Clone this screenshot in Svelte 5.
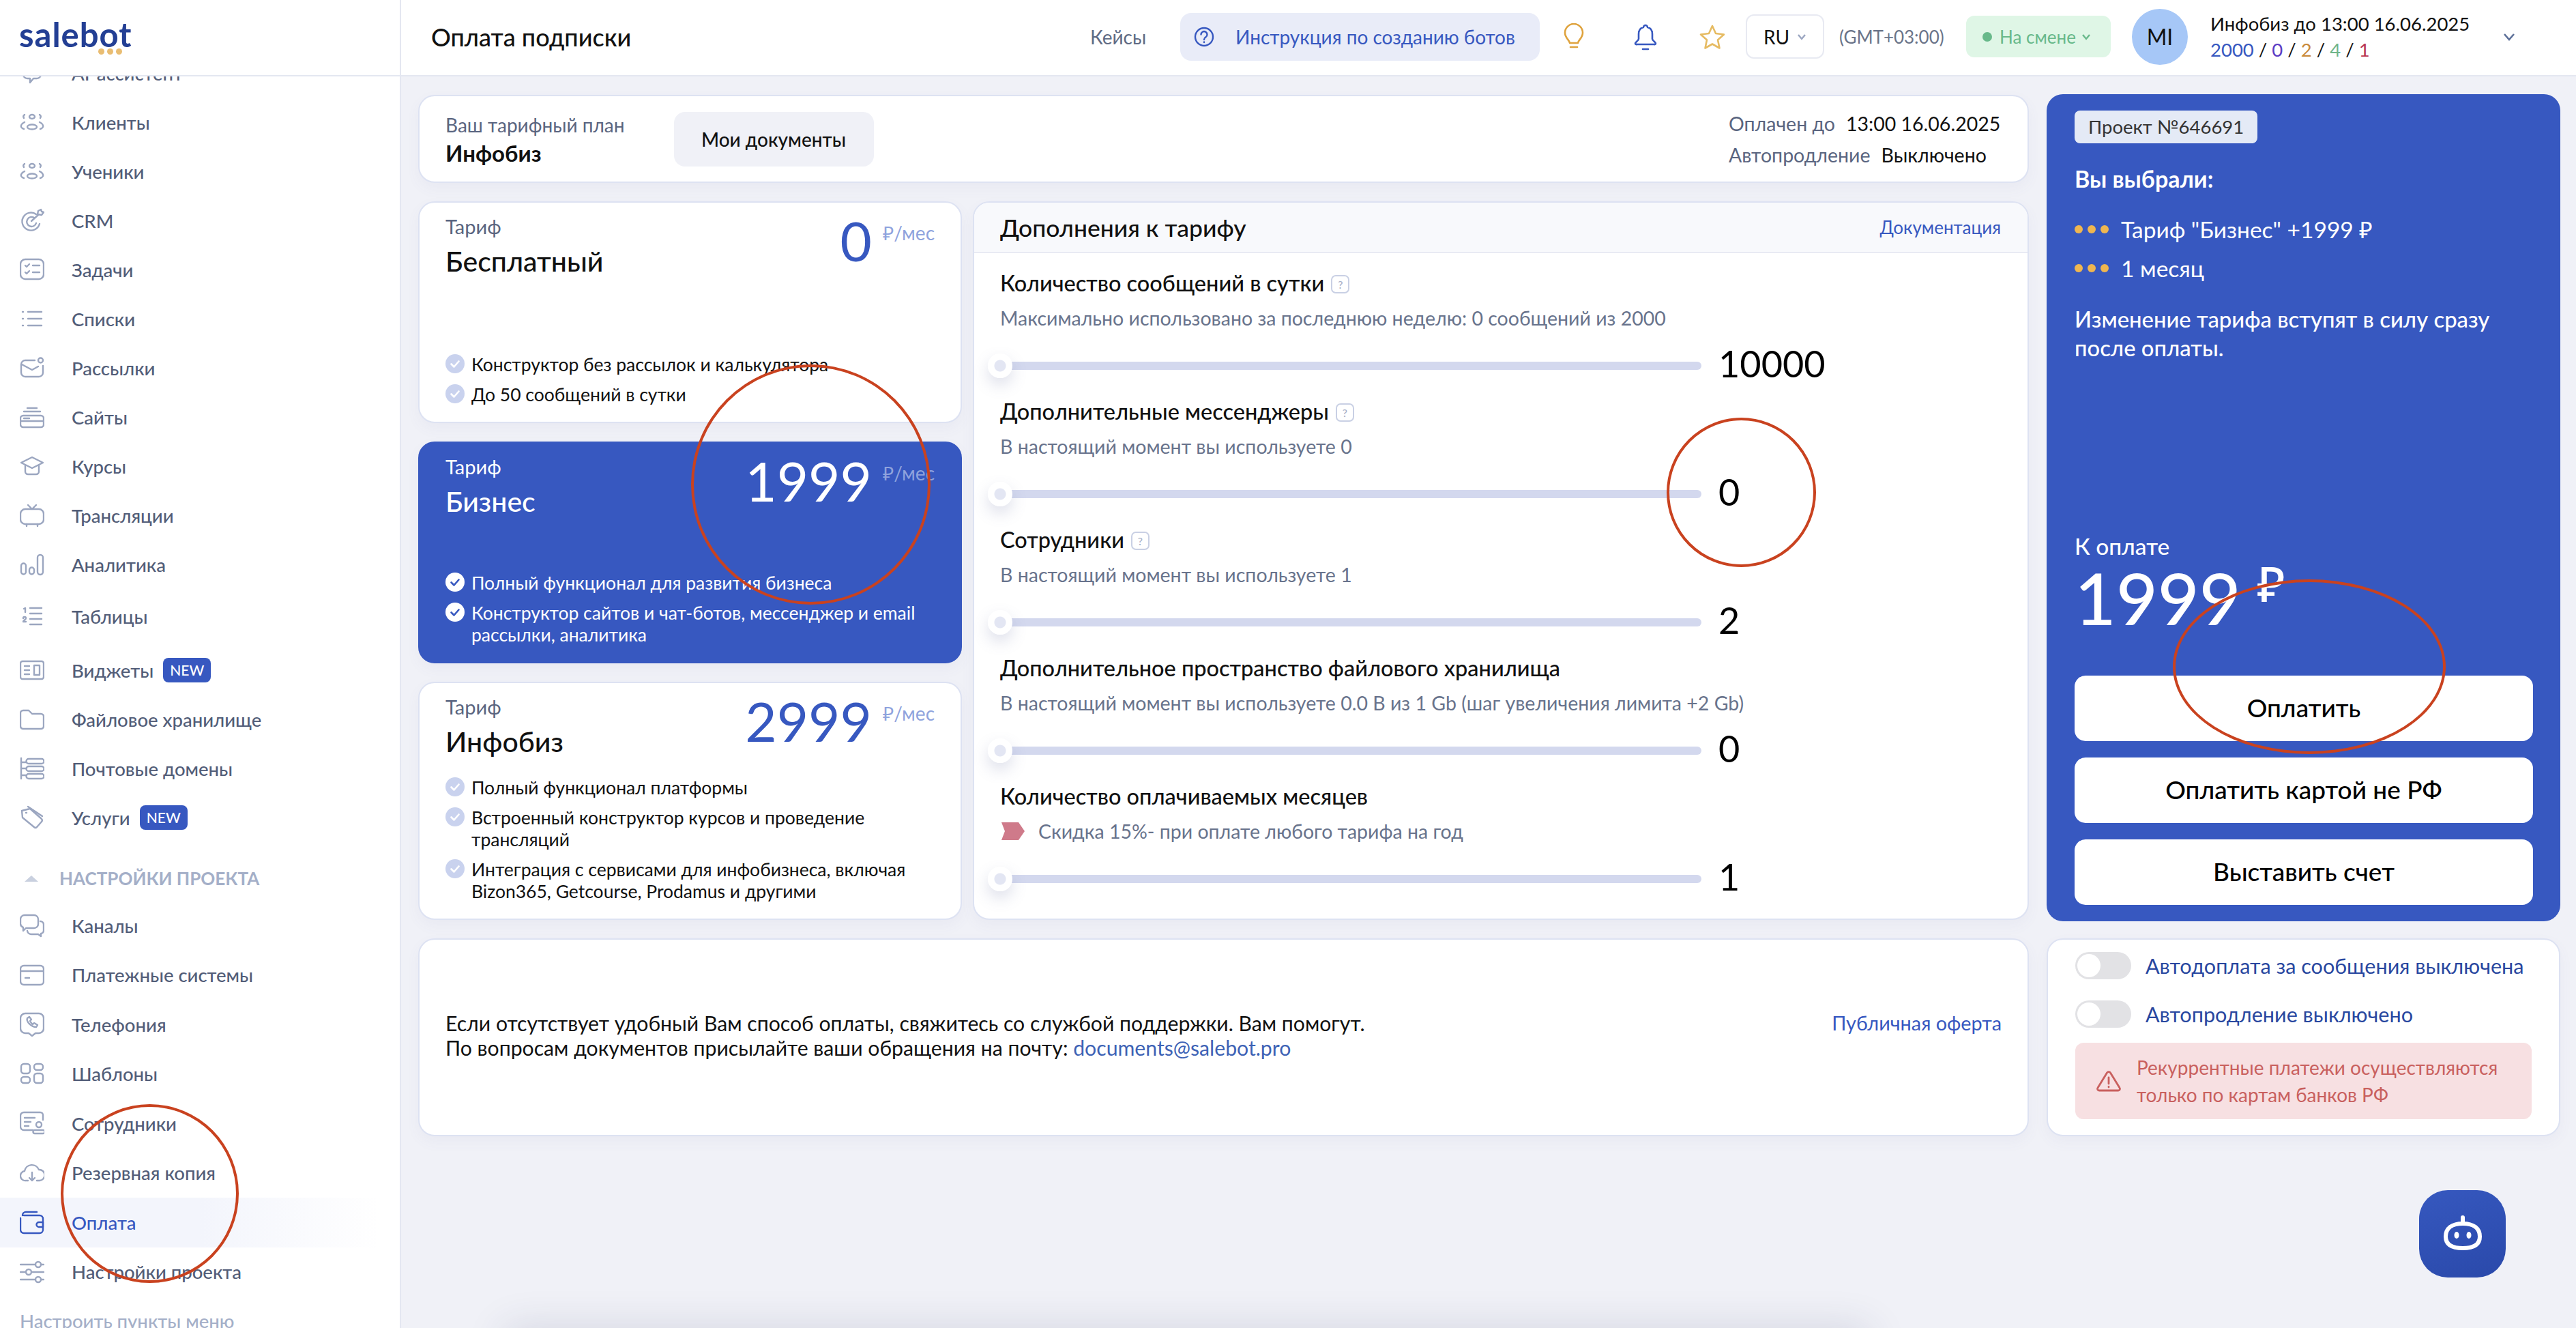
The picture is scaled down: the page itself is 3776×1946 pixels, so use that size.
<script>
  const navTop = [
    { label: "AI-ассистент", icon: ["M5 8a6 6 0 0 1 6-6h14a6 6 0 0 1 6 6v12a6 6 0 0 1-6 6h-5l-5 6v-6h-4a6 6 0 0 1-6-6z"] },
    { label: "Клиенты", icon: "people" },
    { label: "Ученики", icon: "people" },
    { label: "CRM", icon: ["M24 9a13 13 0 1 0 5 14", "M21 14a7 7 0 1 0 3 8", "M17 19 28 9", "M26 9l1-5 4-2 1 3 3 1-3 4z"] },
    { label: "Задачи", icon: ["M8 3h20a7 7 0 0 1 7 7v15a7 7 0 0 1-7 7H8a7 7 0 0 1-7-7V10a7 7 0 0 1 7-7z", "M8 12l2 2 4-4", "M8 22l2 2 4-4", "M19 12h10", "M19 22h10"] },
    { label: "Списки", icon: ["M4 8h1", "M4 18h1", "M4 28h1", "M12 8h20", "M12 18h20", "M12 28h20"] },
    { label: "Рассылки", icon: ["M22 7H8a6 6 0 0 0-6 6v12a6 6 0 0 0 6 6h20a6 6 0 0 0 6-6V15", "M3 13l15 8 9-5", "M27 7a3.5 3.5 0 1 0 7 0a3.5 3.5 0 1 0-7 0"] },
    { label: "Сайты", icon: ["M5 16h26a4 4 0 0 1 4 4v9a4 4 0 0 1-4 4H5a4 4 0 0 1-4-4v-9a4 4 0 0 1 4-4z", "M1 24h34", "M6 20h8", "M6 10h24", "M11 5h14"] },
    { label: "Курсы", icon: ["M18 5 34 13 18 21 2 13z", "M8 17v9a4 4 0 0 0 4 4h12a4 4 0 0 0 4-4v-9"] },
    { label: "Трансляции", icon: ["M8 9h20a7 7 0 0 1 7 7v8a7 7 0 0 1-7 7H8a7 7 0 0 1-7-7v-8a7 7 0 0 1 7-7z", "M12 3l6 6 6-6", "M10 31v3", "M26 31v3"] },
    { label: "Аналитика", icon: ["M2 20a3.5 3.5 0 0 1 7 0v9a3.5 3.5 0 0 1-7 0z", "M14 26a3.5 3.5 0 0 1 7 0v3a3.5 3.5 0 0 1-7 0z", "M26 8a4 4 0 0 1 8 0v21a4 4 0 0 1-8 0z"] },
    { label: "Таблицы", tall: 4, icon: ["M6 7l2-1v6", "M5 21a2 2 0 0 1 4 0c0 2-4 3-4 5h4", "M15 6h17", "M15 14h17", "M15 22h17", "M15 30h17"] },
    { label: "Виджеты", badge: true, tall: 7, icon: ["M4 5h28a3 3 0 0 1 3 3v20a3 3 0 0 1-3 3H4a3 3 0 0 1-3-3V8a3 3 0 0 1 3-3z", "M7 12h7", "M7 18h7", "M7 24h7", "M21 11h8v14h-8z"] },
    { label: "Файловое хранилище", icon: ["M1 9a4 4 0 0 1 4-4h8l5 5h13a4 4 0 0 1 4 4v14a4 4 0 0 1-4 4H5a4 4 0 0 1-4-4z"] },
    { label: "Почтовые домены", icon: ["M2 3v30", "M2 9h8", "M2 18h8", "M2 28h8", "M13 4h19a3 3 0 0 1 0 7H13a3 3 0 0 1 0-7z", "M13 15h19a3 3 0 0 1 0 7H13a3 3 0 0 1 0-7z", "M13 26h19a3 3 0 0 1 0 7H13a3 3 0 0 1 0-7z"] },
    { label: "Услуги", badge: true, icon: ["M3 8l12-3 17 15a3 3 0 0 1 0 4l-7 8a3 3 0 0 1-4 0L4 18z", "M12 2l21 14", "M9 11h1"] }
  ];

  const navBottom = [
    { label: "Каналы", icon: ["M7 3h14a6 6 0 0 1 6 6v7a6 6 0 0 1-6 6H9l-4 4v-5a6 6 0 0 1-4-5V9a6 6 0 0 1 6-6z", "M30 12a5 5 0 0 1 5 5v8a5 5 0 0 1-4 5v4l-4-3H17a6 6 0 0 1-6-5"] },
    { label: "Платежные системы", icon: ["M6 4h24a5 5 0 0 1 5 5v18a5 5 0 0 1-5 5H6a5 5 0 0 1-5-5V9a5 5 0 0 1 5-5z", "M1 12h34", "M8 22h6"] },
    { label: "Телефония", icon: ["M8 2h20a7 7 0 0 1 7 7v15a7 7 0 0 1-7 7h-5l-5 4-5-4H8a7 7 0 0 1-7-7V9a7 7 0 0 1 7-7z", "M11 9c-2 5 6 13 13 13l2-3-5-3-2 2c-2-1-3-3-4-5l2-2-3-4z"] },
    { label: "Шаблоны", icon: ["M2 7a4 4 0 0 1 4-4h5a4 4 0 0 1 4 4v6a4 4 0 0 1-4 4H6a4 4 0 0 1-4-4z", "M21 7a4 4 0 0 1 4-4h5a4 4 0 0 1 4 4v1a4 4 0 0 1-4 4h-5a4 4 0 0 1-4-4z", "M2 26a4 4 0 0 1 4-4h5a4 4 0 0 1 4 4v1a4 4 0 0 1-4 4H6a4 4 0 0 1-4-4z", "M21 21a4 4 0 0 1 4-4h5a4 4 0 0 1 4 4v6a4 4 0 0 1-4 4h-5a4 4 0 0 1-4-4z"] },
    { label: "Сотрудники", icon: ["M19 28H6a5 5 0 0 1-5-5V7a5 5 0 0 1 5-5h24a4 4 0 0 1 4 4v7", "M7 10h15", "M7 16h9", "M7 22h6", "M24 20a4 4 0 1 0 8 0a4 4 0 1 0-8 0", "M22 33h12a2.500 2.500 0 0 0 0-5H22a2.500 2.500 0 0 0 0 5z"] },
    { label: "Резервная копия", icon: ["M9 29a7 7 0 0 1-2-14 11 11 0 0 1 21-2 8 8 0 0 1 1 16h-4", "M18 17v11", "M14 25l4 4 4-4", "M10 29h2"] },
    { label: "Оплата", active: true, icon: ["M4 8a5 5 0 0 1 5-5h16", "M6 8h23a5 5 0 0 1 5 5v16a5 5 0 0 1-5 5H6a5 5 0 0 1-5-5V12", "M28 18h6v7h-6a3.500 3.500 0 0 1 0-7z"] },
    { label: "Настройки проекта", icon: ["M1 7h22", "M31 7h4", "M23 7a4 4 0 1 0 8 0a4 4 0 1 0-8 0", "M1 18h8", "M17 18h18", "M9 18a4 4 0 1 0 8 0a4 4 0 1 0-8 0", "M1 29h22", "M31 29h4", "M23 29a4 4 0 1 0 8 0a4 4 0 1 0-8 0"] }
  ];

  const tariffs = [
    { name: "Бесплатный", price: 0, features: ["Конструктор без рассылок и калькулятора", "До 50 сообщений в сутки"] },
    { name: "Бизнес", price: 1999, selected: true, features: ["Полный функционал для развития бизнеса", "Конструктор сайтов и чат-ботов, мессенджер и email рассылки, аналитика"] },
    { name: "Инфобиз", price: 2999, features: ["Полный функционал платформы", "Встроенный конструктор курсов и проведение трансляций", "Интеграция с сервисами для инфобизнеса, включая Bizon365, Getcourse, Prodamus и другими"] }
  ];

  const addons = [
    { title: "Количество сообщений в сутки", hint: true, sub: "Максимально использовано за последнюю неделю: 0 сообщений из 2000", value: 10000 },
    { title: "Дополнительные мессенджеры", hint: true, sub: "В настоящий момент вы используете 0", value: 0 },
    { title: "Сотрудники", hint: true, sub: "В настоящий момент вы используете 1", value: 2 },
    { title: "Дополнительное пространство файлового хранилища", sub: "В настоящий момент вы используете 0.0 B из 1 Gb (шаг увеличения лимита +2 Gb)", value: 0 },
    { title: "Количество оплачиваемых месяцев", discount: true, sub: "Скидка 15%- при оплате любого тарифа на год", value: 1 }
  ];

  const people = ["M14 10a4 3 0 1 0 8 0a4 3 0 1 0-8 0", "M7 7q-3 2-1 5", "M29 7q3 2 1 5", "M11 25a7 3.500 0 1 0 14 0a7 3.500 0 1 0-14 0", "M7 18q-6 3-5 7 1 2 4 3", "M29 18q6 3 5 7-1 2-4 3"];
</script>

{#snippet navRow(item)}
  <div class="nav-row" class:active={item.active} style:margin-top={item.tall ? item.tall + "px" : null}>
    <svg class="nav-icon" viewBox="0 0 36 36">
      {#each item.icon === "people" ? people : item.icon as d}
        <path {d} />
      {/each}
    </svg>
    <span>{item.label}</span>
    {#if item.badge}<span class="new">NEW</span>{/if}
  </div>
{/snippet}

{#snippet check()}
  <svg class="check" viewBox="0 0 28 28">
    <circle class="check-bg" cx="14" cy="14" r="14" />
    <path class="check-mark" d="M8.500 14.500l4 4 7-8" />
  </svg>
{/snippet}

<div class="page">
  <aside class="sidebar">
    <div class="logo">
      <span class="logo-text">salebot</span>
      <span class="logo-dots"><i></i><i></i><i></i></span>
    </div>
    <nav class="nav">
      {#each navTop as item}
        {@render navRow(item)}
      {/each}
      <div class="nav-section"><span class="triangle"></span>НАСТРОЙКИ ПРОЕКТА</div>
      {#each navBottom as item}
        {@render navRow(item)}
      {/each}
      <div class="nav-custom">Настроить пункты меню</div>
    </nav>
  </aside>

  <div class="main">
    <header class="topbar">
      <h1>Оплата подписки</h1>
      <a class="cases" href="#cases">Кейсы</a>
      <div class="guide">
        <svg viewBox="0 0 30 30" class="guide-icon">
          <circle cx="15" cy="15" r="13" />
          <path d="M10.500 11.500a4.500 4.500 0 1 1 7 3.800c-1.800 1.200-2.500 2-2.500 3.700" />
          <path d="M15 22.500v.5" />
        </svg>
        Инструкция по созданию ботов
      </div>
      <svg class="bar-icon bulb" viewBox="0 0 32 40">
        <path d="M10 29c0-4-7-7-7-15a13 13 0 0 1 26 0c0 8-7 11-7 15z" />
        <path d="M11 35h10" />
      </svg>
      <svg class="bar-icon bell" viewBox="0 0 36 40">
        <path d="M18 3a3 3 0 0 1 3 3c5 1 7 5 7 10v7c0 3 5 4 5 7a1.500 1.500 0 0 1-2 1H5a1.500 1.500 0 0 1-2-1c0-3 5-4 5-7v-7c0-5 2-9 7-10a3 3 0 0 1 3-3z" />
        <path d="M14 38h8" />
      </svg>
      <svg class="bar-icon star" viewBox="0 0 40 38">
        <path d="M20 3l5 11 12 1.500-9 8 2.500 12L20 29.500 9.500 35.500l2.500-12-9-8L15 14z" />
      </svg>
      <div class="lang">RU <svg class="chev" viewBox="0 0 14 10"><path d="M2 2l5 6 5-6" /></svg></div>
      <span class="tz">(GMT+03:00)</span>
      <div class="status"><i></i>На смене <svg class="chev" viewBox="0 0 14 10"><path d="M2 2l5 6 5-6" /></svg></div>
      <div class="avatar">MI</div>
      <div class="account">
        <div>Инфобиз до 13:00 16.06.2025</div>
        <div class="counts"><b class="c1">2000</b> / <b class="c2">0</b> / <b class="c3">2</b> / <b class="c4">4</b> / <b class="c5">1</b></div>
      </div>
      <svg class="account-chev" viewBox="0 0 20 14"><path d="M3 3l7 8 7-8" /></svg>
    </header>

    <div class="content">
      <div class="left-col">
        <section class="card plan">
          <div>
            <div class="muted">Ваш тарифный план</div>
            <div class="plan-name">Инфобиз</div>
          </div>
          <div class="docs-btn">Мои документы</div>
          <div class="plan-meta">
            <div><span class="muted">Оплачен до</span><span>13:00 16.06.2025</span></div>
            <div><span class="muted">Автопродление</span><span>Выключено</span></div>
          </div>
        </section>

        <div class="middle">
          <div class="tariffs">
            {#each tariffs as t}
              <section class="card tariff" class:selected={t.selected}>
                <div class="tariff-head">
                  <div>
                    <div class="tariff-label">Тариф</div>
                    <div class="tariff-name">{t.name}</div>
                  </div>
                  <div class="tariff-price">{t.price}</div>
                  <div class="tariff-unit">₽/мес</div>
                </div>
                <ul class="features">
                  {#each t.features as f}
                    <li>{@render check()}<span>{f}</span></li>
                  {/each}
                </ul>
              </section>
            {/each}
          </div>

          <section class="card addons">
            <div class="addons-head">
              <h2>Дополнения к тарифу</h2>
              <a href="#docs">Документация</a>
            </div>
            <div class="addons-body">
              {#each addons as a}
                <div class="addon">
                  <div class="addon-title">
                    {a.title}
                    {#if a.hint}<span class="hint">?</span>{/if}
                  </div>
                  <div class="addon-sub">
                    {#if a.discount}
                      <svg class="ribbon" viewBox="0 0 38 30"><path d="M2 2h25l9 13-9 13H2l5-13z" /></svg>
                    {/if}
                    {a.sub}
                  </div>
                  <div class="slider">
                    <div class="track"><span class="thumb"></span></div>
                    <span class="value">{a.value}</span>
                  </div>
                </div>
              {/each}
            </div>
          </section>
        </div>
      </div>

      <section class="pay">
        <div class="chip">Проект №646691</div>
        <div class="pay-title">Вы выбрали:</div>
        <div class="pay-line"><span class="dots"><i></i><i></i><i></i></span>Тариф "Бизнес" +1999 ₽</div>
        <div class="pay-line"><span class="dots"><i></i><i></i><i></i></span>1 месяц</div>
        <p class="pay-note">Изменение тарифа вступят в силу сразу<br />после оплаты.</p>
        <div class="pay-bottom">
          <div class="pay-label">К оплате</div>
          <div class="pay-sum">1999<sup>₽</sup></div>
          <button>Оплатить</button>
          <button>Оплатить картой не РФ</button>
          <button>Выставить счет</button>
        </div>
      </section>

      <section class="card help">
        <p>
          Если отсутствует удобный Вам способ оплаты, свяжитесь со службой поддержки. Вам помогут.<br />
          По вопросам документов присылайте ваши обращения на почту: <a href="#mail">documents@salebot.pro</a>
        </p>
        <a class="offer" href="#offer">Публичная оферта</a>
      </section>

      <section class="card auto">
        <div class="auto-row"><span class="toggle"></span>Автодоплата за сообщения выключена</div>
        <div class="auto-row"><span class="toggle"></span>Автопродление выключено</div>
        <div class="alert">
          <svg viewBox="0 0 38 32">
            <path d="M16.500 4 3 26a2.500 2.500 0 0 0 2 4h28a2.500 2.500 0 0 0 2-4L21.500 4a3 3 0 0 0-5 0z" />
            <path d="M19 11v9" />
            <path d="M19 24.500v.5" />
          </svg>
          <span>Рекуррентные платежи осуществляются<br />только по картам банков РФ</span>
        </div>
      </section>
    </div>
  </div>

  <div class="bot">
    <svg viewBox="0 0 60 56">
      <path class="bot-line" d="M30 4v9" />
      <circle class="bot-dot" cx="30" cy="4" r="3" />
      <path class="bot-line" d="M30 13c-16 0-25 7-25 19 0 11 8 17 25 17s25-6 25-17c0-12-9-19-25-19z" />
      <ellipse class="bot-dot" cx="21" cy="30" rx="3.500" ry="5" />
      <ellipse class="bot-dot" cx="39" cy="30" rx="3.500" ry="5" />
    </svg>
  </div>

  <div class="foot-shadow"></div>

  <span class="mark mark-price"></span>
  <span class="mark mark-zero"></span>
  <span class="mark mark-pay"></span>
  <span class="mark mark-nav"></span>
</div>

<style>
  :global(body) {
    margin: 0;
    background: #f0f1f7;
  }

  .page {
    position: relative;
    display: flex;
    width: 3776px;
    height: 1946px;
    overflow: hidden;
    background: #f0f1f7;
    color: #111;
    font-family: Lato, "Noto Sans", sans-serif;
    font-size: 28px;
  }

  /* sidebar */
  .sidebar {
    position: relative;
    flex: 0 0 586px;
    height: 1946px;
    overflow: hidden;
    background: #fff;
    border-right: 2px solid #e4e7f1;
  }

  .logo {
    position: relative;
    z-index: 2;
    height: 110px;
    background: #fff;
    border-bottom: 2px solid #e4e7f1;
  }

  .logo-text {
    position: absolute;
    left: 28px;
    top: 20px;
    color: #233f94;
    font-size: 49px;
    font-weight: 700;
    line-height: 60px;
    letter-spacing: 1px;
  }

  .logo-dots {
    position: absolute;
    left: 144px;
    top: 71px;
    display: flex;
    gap: 4px;
  }

  .logo-dots i {
    width: 9px;
    height: 9px;
    border-radius: 50%;
    background: #e9bd72;
  }

  .nav {
    display: flex;
    flex-direction: column;
    margin-top: -41px;
    color: #525d78;
    font-size: 27.5px;
    font-weight: 500;
  }

  .nav-row {
    display: flex;
    flex: 0 0 72px;
    align-items: center;
    padding-left: 29px;
    white-space: nowrap;
  }

  .nav-row.active {
    background: linear-gradient(90deg, #f3f5fc 50%, #fff 95%);
    color: #3758c0;
  }

  .nav-icon {
    flex: none;
    width: 36px;
    height: 36px;
    margin-right: 40px;
    fill: none;
    stroke: #9ba6c0;
    stroke-width: 2.4;
    stroke-linecap: round;
    stroke-linejoin: round;
  }

  .active .nav-icon {
    stroke: #3758c0;
  }

  .new {
    margin-left: 14px;
    padding: 0 10px;
    border-radius: 8px;
    background: #3758c0;
    color: #fff;
    font-size: 21px;
    line-height: 36px;
  }

  .nav-section {
    display: flex;
    align-items: center;
    margin: 20px 0 0 36px;
    height: 66px;
    color: #a4afc8;
    font-size: 26px;
    font-weight: 700;
  }

  .nav-section ~ .nav-row {
    flex-basis: 72.5px;
  }

  .triangle {
    width: 0;
    height: 0;
    margin-right: 31px;
    border: 10px solid transparent;
    border-top: 0;
    border-bottom: 9px solid #c9d0df;
  }

  .nav-custom {
    margin: 16px 0 0 29px;
    color: #a4afc8;
    line-height: 40px;
  }

  /* header */
  .main {
    flex: 1;
    min-width: 0;
  }

  .topbar {
    display: flex;
    align-items: center;
    box-sizing: border-box;
    height: 112px;
    padding: 0 0 3px 44px;
    background: #fff;
    border-bottom: 2px solid #e4e7f1;
  }

  h1 {
    margin: 0;
    font-size: 36px;
    font-weight: 500;
    width: 966px;
  }

  .cases {
    width: 132px;
    color: #606b84;
    text-decoration: none;
  }

  .guide {
    display: flex;
    align-items: center;
    width: 527px;
    height: 70px;
    box-sizing: border-box;
    padding-left: 20px;
    border-radius: 16px;
    background: #e9ecf8;
    color: #3758c0;
  }

  .guide-icon {
    width: 30px;
    height: 30px;
    margin-right: 31px;
    fill: none;
    stroke: #3758c0;
    stroke-width: 2.4;
    stroke-linecap: round;
  }

  .bar-icon {
    fill: none;
    stroke-width: 2.6;
    stroke-linecap: round;
    stroke-linejoin: round;
  }

  .bulb {
    width: 32px;
    height: 40px;
    margin-left: 34px;
    stroke: #dfa33e;
  }

  .bell {
    width: 36px;
    height: 40px;
    margin-left: 71px;
    stroke: #3758c0;
  }

  .star {
    width: 40px;
    height: 38px;
    margin-left: 60px;
    stroke: #e6bb62;
  }

  .lang {
    display: flex;
    align-items: center;
    justify-content: center;
    gap: 11px;
    width: 115px;
    height: 65px;
    box-sizing: border-box;
    margin-left: 29px;
    border: 2px solid #e8eaf2;
    border-radius: 12px;
  }

  .chev {
    width: 14px;
    height: 10px;
    fill: none;
    stroke: #9aa5c0;
    stroke-width: 2.4;
  }

  .tz {
    width: 156px;
    margin-left: 22px;
    color: #6a7489;
    font-size: 26px;
    white-space: nowrap;
  }

  .status {
    display: flex;
    align-items: center;
    gap: 8px;
    width: 212px;
    height: 61px;
    box-sizing: border-box;
    margin-left: 30px;
    padding-left: 24px;
    border-radius: 12px;
    background: #dff6e6;
    color: #68b98a;
    font-size: 26px;
    white-space: nowrap;
  }

  .status i {
    width: 14px;
    height: 14px;
    margin-right: 3px;
    border-radius: 50%;
    background: #68b98a;
  }

  .status .chev {
    stroke: #68b98a;
  }

  .avatar {
    flex: none;
    display: flex;
    align-items: center;
    justify-content: center;
    width: 82px;
    height: 82px;
    margin-left: 31px;
    border-radius: 50%;
    background: #a6c7f7;
    font-size: 32px;
  }

  .account {
    width: 428px;
    margin-left: 33px;
    font-size: 27.500px;
    line-height: 38px;
    white-space: nowrap;
  }

  .counts b {
    font-weight: 400;
  }

  .c1 { color: #3758c0; }
  .c2 { color: #5b3cc4; }
  .c3 { color: #c98a3a; }
  .c4 { color: #6fb58a; }
  .c5 { color: #b8354f; }

  .account-chev {
    width: 20px;
    height: 14px;
    fill: none;
    stroke: #5d7099;
    stroke-width: 2.6;
  }

  /* content */
  .content {
    display: grid;
    grid-template-columns: 2361px 753px;
    grid-template-rows: 1212px 290px;
    gap: 25px 26px;
    padding: 26px 0 0 25px;
  }

  .card {
    box-sizing: border-box;
    border: 2px solid #dde2f2;
    border-radius: 24px;
    background: #fff;
    box-shadow: 0 8px 20px rgba(90, 100, 150, 0.05);
  }

  .left-col {
    display: flex;
    flex-direction: column;
    gap: 27px;
    padding-top: 1px;
  }

  .plan {
    display: flex;
    align-items: center;
    flex: 0 0 129px;
    padding: 0 38px;
  }

  .muted {
    color: #5a6580;
    line-height: 40px;
  }

  .plan-name {
    margin-top: 1px;
    font-size: 33px;
    font-weight: 700;
    line-height: 40px;
  }

  .docs-btn {
    display: flex;
    align-items: center;
    justify-content: center;
    width: 293px;
    height: 80px;
    margin-left: 72px;
    border-radius: 16px;
    background: #f0f1f7;
    font-weight: 500;
  }

  .plan-meta {
    display: flex;
    flex-direction: column;
    gap: 6px;
    margin-left: auto;
    margin-right: 2px;
    font-size: 28.500px;
    line-height: 40px;
    width: 398px;
  }

  .plan-meta div {
    display: flex;
    gap: 16px;
    white-space: nowrap;
  }

  .middle {
    display: flex;
    gap: 16px;
    flex: 0 0 1053px;
  }

  .tariffs {
    display: flex;
    flex-direction: column;
    gap: 27px;
    flex: 0 0 797px;
  }

  .tariff {
    display: flex;
    flex-direction: column;
    flex: 1 1 auto;
    padding: 17px 38px 24px;
    height: 325px;
  }

  .tariff:nth-child(3) {
    flex-basis: 349px;
    height: 349px;
  }

  .tariff.selected {
    border-color: #3758c0;
    background: #3758c0;
    color: #fff;
  }

  .tariff-head {
    display: flex;
    align-items: flex-start;
  }

  .tariff-label {
    color: #5a6580;
    font-size: 29px;
    line-height: 36px;
  }

  .selected .tariff-label {
    color: #fff;
  }

  .tariff-name {
    margin-top: 8px;
    font-size: 41px;
    font-weight: 500;
    line-height: 50px;
  }

  .tariff-price {
    margin: -7px 0 0 auto;
    color: #3758c0;
    font-size: 80px;
    font-weight: 400;
    line-height: 90px;
  }

  .selected .tariff-price {
    color: #fff;
  }

  .tariff-unit {
    margin: 9px 0 0 16px;
    color: #8fa3dd;
    line-height: 36px;
  }

  .features {
    margin: auto 0 0;
    padding: 0;
    list-style: none;
    font-size: 26.500px;
    line-height: 32px;
  }

  .features li {
    display: flex;
    gap: 10px;
    margin-top: 12px;
  }

  .check {
    flex: none;
    width: 28px;
    height: 28px;
    margin-top: 1px;
  }

  .check-bg {
    fill: #c9d2ee;
  }

  .check-mark {
    fill: none;
    stroke: #fff;
    stroke-width: 2.6;
    stroke-linecap: round;
    stroke-linejoin: round;
  }

  .selected .check-bg {
    fill: #fff;
  }

  .selected .check-mark {
    stroke: #3758c0;
  }

  .addons {
    flex: 0 0 1548px;
    overflow: hidden;
  }

  .addons-head {
    display: flex;
    align-items: center;
    justify-content: space-between;
    height: 72px;
    padding: 0 39px 0 38px;
    background: #f8f9fc;
    border-bottom: 2px solid #e8eaf3;
  }

  h2 {
    margin: 0;
    font-size: 35.500px;
    font-weight: 500;
  }

  .addons-head a {
    color: #3758c0;
    font-size: 26px;
    text-decoration: none;
  }

  .addons-body {
    padding: 24px 0 0 38px;
  }

  .addon {
    height: 188px;
  }

  .addon-title {
    display: flex;
    align-items: center;
    gap: 10px;
    font-size: 32.500px;
    font-weight: 500;
    line-height: 40px;
  }

  .hint {
    display: flex;
    align-items: center;
    justify-content: center;
    width: 27px;
    height: 27px;
    box-sizing: border-box;
    margin-top: 3px;
    border: 2px solid #c9d0e4;
    border-radius: 7px;
    color: #a7b0c8;
    font-size: 16px;
    line-height: 1;
  }

  .addon-sub {
    display: flex;
    align-items: center;
    gap: 18px;
    margin-top: 15px;
    color: #68738c;
    font-size: 28.500px;
    line-height: 32px;
  }

  .ribbon {
    width: 38px;
    height: 30px;
    fill: #cf7a8a;
  }

  .slider {
    display: flex;
    align-items: center;
    gap: 25px;
    height: 60px;
    margin-top: 24px;
  }

  .track {
    position: relative;
    flex: 0 0 1028px;
    height: 12px;
    border-radius: 6px;
    background: #d3d8ee;
  }

  .thumb {
    position: absolute;
    left: -18px;
    top: -12px;
    width: 36px;
    height: 36px;
    border-radius: 50%;
    background: radial-gradient(circle, #e3e6f3 8px, #fff 9px);
    box-shadow: 0 10px 22px rgba(100, 110, 160, 0.22);
  }

  .value {
    color: #000;
    font-size: 54px;
    line-height: 60px;
    margin-top: -6px;
  }

  /* pay panel */
  .pay {
    display: flex;
    flex-direction: column;
    box-sizing: border-box;
    padding: 24px 40px 24px 41px;
    border-radius: 24px;
    background: #3758c0;
    color: #fff;
  }

  .chip {
    align-self: flex-start;
    padding: 0 20px;
    border-radius: 8px;
    background: #e4eaf6;
    color: #333;
    font-size: 27.500px;
    line-height: 48px;
  }

  .pay-title {
    margin-top: 30px;
    font-size: 34px;
    font-weight: 700;
    line-height: 44px;
  }

  .pay-line {
    display: flex;
    align-items: center;
    gap: 18px;
    height: 44px;
    font-size: 33.500px;
    margin-top: 13px;
  }

  .pay-title + .pay-line {
    margin-top: 30px;
  }

  .dots {
    display: flex;
    gap: 7px;
  }

  .dots i {
    width: 12px;
    height: 12px;
    border-radius: 50%;
    background: #efb650;
  }

  .pay-note {
    margin: 32px 0 0;
    font-size: 32.800px;
    font-weight: 500;
    line-height: 42px;
  }

  .pay-bottom {
    margin-top: auto;
  }

  .pay-label {
    font-size: 33.500px;
    font-weight: 500;
    line-height: 40px;
  }

  .pay-sum {
    height: 95px;
    margin: 15px 0 60px 0;
    font-size: 105px;
    font-weight: 500;
    line-height: 80px;
  }

  .pay-sum sup {
    margin-left: 24px;
    font-size: 70px;
    line-height: 0;
    vertical-align: 34px;
    font-weight: 500;
  }

  .pay-bottom button {
    display: block;
    width: 100%;
    height: 96px;
    margin-top: 24px;
    padding-bottom: 5px;
    border: 0;
    border-radius: 16px;
    background: #fff;
    color: #000;
    font: inherit;
    font-size: 37px;
    font-weight: 500;
  }

  /* bottom cards */
  .help {
    display: flex;
    align-items: center;
    justify-content: space-between;
    padding: 0 38px 6px;
    font-size: 30.200px;
    line-height: 36px;
  }

  .help p {
    margin: 0;
  }

  .help a {
    color: #3d62b5;
    text-decoration: none;
  }

  .help .offer {
    margin-top: -36px;
    color: #3758c0;
    font-size: 28.800px;
  }

  .auto {
    padding: 18px 40px 0 40px;
  }

  .auto-row {
    display: flex;
    align-items: center;
    gap: 21px;
    height: 40px;
    margin-bottom: 31px;
    color: #28479f;
    font-size: 30.600px;
    white-space: nowrap;
  }

  .toggle {
    position: relative;
    flex: none;
    width: 82px;
    height: 40px;
    border-radius: 20px;
    background: #e2e2e5;
  }

  .toggle::after {
    content: "";
    position: absolute;
    left: 3px;
    top: 3px;
    width: 34px;
    height: 34px;
    border-radius: 50%;
    background: #fff;
  }

  .alert {
    display: flex;
    align-items: center;
    gap: 22px;
    height: 112px;
    width: 669px;
    box-sizing: border-box;
    margin-top: -9px;
    padding-left: 30px;
    border-radius: 12px;
    background: #f7e0e2;
    color: #c9605e;
    font-size: 28px;
    line-height: 40px;
  }

  .alert svg {
    flex: none;
    width: 38px;
    height: 32px;
    fill: none;
    stroke: #c9605e;
    stroke-width: 2.8;
    stroke-linecap: round;
    stroke-linejoin: round;
  }

  /* overlays */
  .bot {
    position: absolute;
    left: 3546px;
    top: 1744px;
    display: flex;
    align-items: center;
    justify-content: center;
    width: 127px;
    height: 128px;
    border-radius: 42px;
    background: linear-gradient(160deg, #3658bf, #2a49aa);
  }

  .bot svg {
    width: 60px;
    height: 56px;
  }

  .bot-line {
    fill: none;
    stroke: #fff;
    stroke-width: 6;
  }

  .bot-dot {
    fill: #fff;
  }

  .foot-shadow {
    position: absolute;
    left: 760px;
    top: 1966px;
    width: 1960px;
    height: 20px;
    box-shadow: 0 0 60px 20px rgba(40, 50, 90, 0.14);
  }

  .mark {
    position: absolute;
    box-sizing: border-box;
    border: 4px solid #c9421f;
    border-radius: 50%;
  }

  .mark-price {
    left: 1013px;
    top: 534px;
    width: 351px;
    height: 352px;
  }

  .mark-zero {
    left: 2443px;
    top: 612px;
    width: 219px;
    height: 219px;
  }

  .mark-pay {
    left: 3185px;
    top: 849px;
    width: 400px;
    height: 256px;
  }

  .mark-nav {
    left: 89px;
    top: 1618px;
    width: 261px;
    height: 262px;
  }
</style>
